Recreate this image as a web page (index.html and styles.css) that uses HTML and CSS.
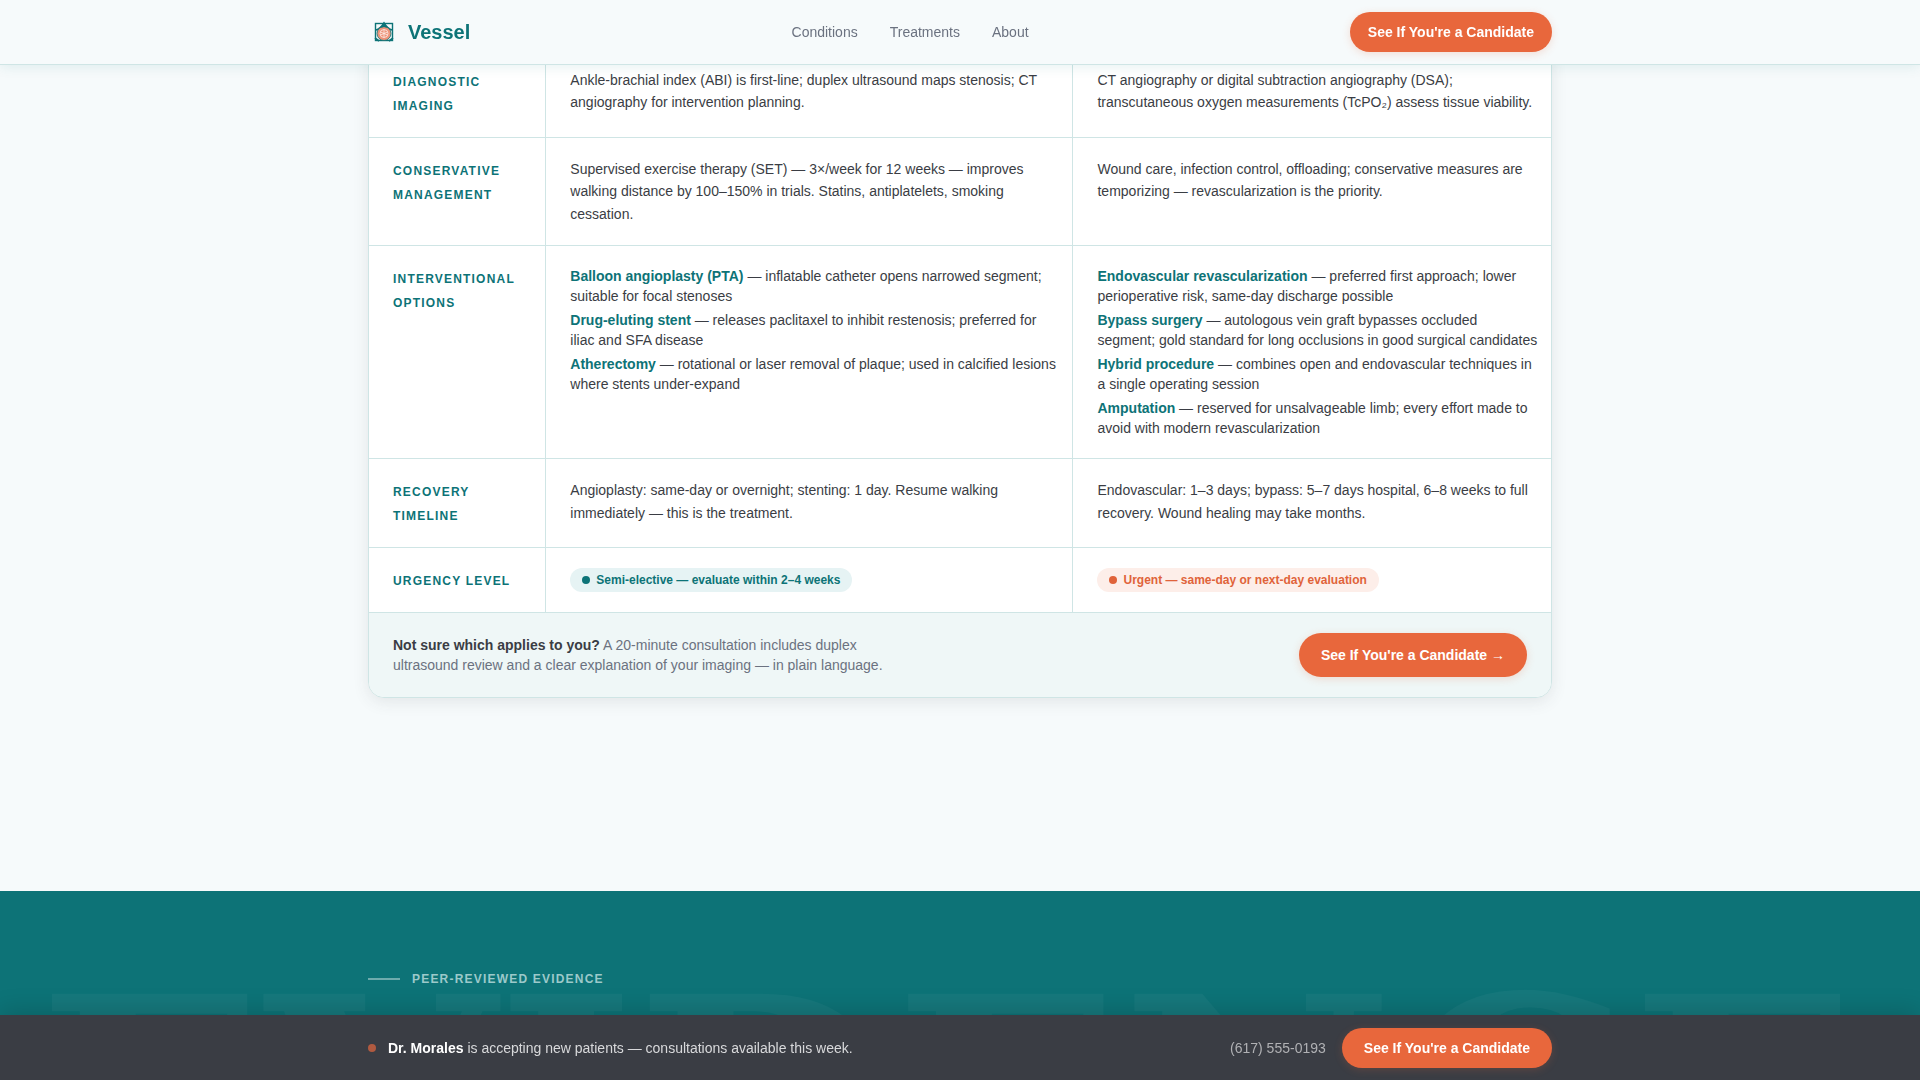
FILE: index.html
```html
<!DOCTYPE html>
<html lang="en">

<head>
    <meta charset="UTF-8">
    <meta name="viewport" content="width=device-width, initial-scale=1.0">
    <title>Vessel</title>
    <link rel="stylesheet" href="styles.css">
</head>

<body>
    <header class="site-header">
        <div class="container header-inner">
            <a class="logo" href="#">
                <svg class="logo-icon" viewBox="0 0 32 32" aria-hidden="true">
                    <rect x="7.500" y="7.500" width="17" height="17" fill="#f6fafb" stroke="#0d7377" stroke-width="1.4" />
                    <path d="M7 14c3 0 6-2 9-7 3 5 6 7 9 7M7 22l4 3M25 22l-4 3" fill="none" stroke="#0d7377" stroke-width="1.6" />
                    <circle cx="16" cy="17.500" r="7" fill="#ee9379" stroke="#0d7377" stroke-width="0.800" />
                    <path d="M12 12l4-4.500 4 4.500-4-1z" fill="#0d7377" />
                    <circle cx="16" cy="17.500" r="4" fill="none" stroke="#fdeee9" stroke-width="0.800" />
                    <path d="M16 13.500v8M12.500 16l7 3M19.500 16l-7 3" stroke="#fdeee9" stroke-width="0.800" />
                </svg>
                <span>Vessel</span>
            </a>
            <nav class="nav">
                <a href="#conditions">Conditions</a>
                <a href="#treatments">Treatments</a>
                <a href="#about">About</a>
            </nav>
            <a class="btn" href="#contact">See If You're a Candidate</a>
        </div>
    </header>

    <main>
        <section class="compare container" id="treatments">
            <div class="card">
                <table class="compare-table">
                    <colgroup>
                        <col class="col-label">
                        <col class="col-first">
                        <col>
                    </colgroup>
                    <tbody>
                        <tr>
                            <th scope="row">Diagnostic Imaging</th>
                            <td>Ankle-brachial index (ABI) is first-line; duplex ultrasound maps stenosis; CT angiography for intervention planning.</td>
                            <td>CT angiography or digital subtraction angiography (DSA); transcutaneous oxygen measurements (TcPO₂) assess tissue viability.</td>
                        </tr>
                        <tr>
                            <th scope="row">Conservative Management</th>
                            <td>Supervised exercise therapy (SET) — 3×/week for 12 weeks — improves walking distance by 100–150% in trials. Statins, antiplatelets, smoking cessation.</td>
                            <td>Wound care, infection control, offloading; conservative measures are temporizing — revascularization is the priority.</td>
                        </tr>
                        <tr>
                            <th scope="row">Interventional Options</th>
                            <td>
                                <ul class="options">
                                    <li><strong>Balloon angioplasty (PTA)</strong> — inflatable catheter opens narrowed segment; suitable for focal stenoses</li>
                                    <li><strong>Drug-eluting stent</strong> — releases paclitaxel to inhibit restenosis; preferred for iliac and SFA disease</li>
                                    <li><strong>Atherectomy</strong> — rotational or laser removal of plaque; used in calcified lesions where stents under-expand</li>
                                </ul>
                            </td>
                            <td>
                                <ul class="options">
                                    <li><strong>Endovascular revascularization</strong> — preferred first approach; lower perioperative risk, same-day discharge possible</li>
                                    <li><strong>Bypass surgery</strong> — autologous vein graft bypasses occluded<br>segment; gold standard for long occlusions in good surgical candidates</li>
                                    <li><strong>Hybrid procedure</strong> — combines open and endovascular techniques in a&nbsp;single operating session</li>
                                    <li><strong>Amputation</strong> — reserved for unsalvageable limb; every effort made to avoid with modern revascularization</li>
                                </ul>
                            </td>
                        </tr>
                        <tr>
                            <th scope="row">Recovery Timeline</th>
                            <td>Angioplasty: same-day or overnight; stenting: 1 day. Resume walking immediately — this is the treatment.</td>
                            <td>Endovascular: 1–3 days; bypass: 5–7 days hospital, 6–8 weeks to full recovery. Wound healing may take months.</td>
                        </tr>
                        <tr>
                            <th scope="row">Urgency Level</th>
                            <td><span class="badge badge-elective">Semi-elective — evaluate within 2–4 weeks</span></td>
                            <td><span class="badge badge-urgent">Urgent — same-day or next-day evaluation</span></td>
                        </tr>
                    </tbody>
                </table>
                <div class="card-footer">
                    <p><strong>Not sure which applies to you?</strong> A 20-minute consultation includes duplex<br>ultrasound review and a clear explanation of your imaging — in plain language.</p>
                    <a class="btn btn-large" href="#contact">See If You're a Candidate →</a>
                </div>
            </div>
        </section>

        <section class="evidence">
            <div class="watermark" aria-hidden="true">EVIDENCE</div>
            <div class="container">
                <p class="eyebrow">Peer-Reviewed Evidence</p>
            </div>
        </section>
    </main>

    <div class="sticky-bar">
        <div class="container sticky-inner">
            <p class="notice"><strong>Dr. Morales</strong> is accepting new patients — consultations available this week.</p>
            <a class="phone" href="tel:+16175550193">(617) 555-0193</a>
            <a class="btn btn-bar" href="#contact">See If You're a Candidate</a>
        </div>
    </div>
</body>

</html>
```
FILE: styles.css
```css
* {
    box-sizing: border-box;
}

body {
    margin: 0;
    font-family: "Liberation Sans", Arial, sans-serif;
    font-size: 14px;
    color: #3a3d44;
    background-color: #f6fafb;
}

main {
    display: flex;
    flex-direction: column;
    min-height: 100vh;
}

p {
    margin: 0;
}

a {
    text-decoration: none;
}

.container {
    width: 100%;
    max-width: 1248px;
    margin: 0 auto;
    padding: 0 32px;
}

/* Header */
.site-header {
    position: fixed;
    top: 0;
    left: 0;
    right: 0;
    z-index: 10;
    background-color: #f6fafb;
    border-bottom: 1px solid #cfe5e5;
    box-shadow: 0 2px 12px rgba(13, 115, 119, 0.1);
}

.header-inner {
    display: flex;
    align-items: center;
    justify-content: space-between;
    height: 64px;
}

.logo {
    display: flex;
    align-items: center;
    gap: 8px;
    font-size: 20px;
    font-weight: bold;
    color: #0d7377;
}

.logo-icon {
    width: 32px;
    height: 32px;
}

.nav {
    display: flex;
    gap: 32px;
}

.nav a {
    color: #6b7280;
}

/* Buttons */
.btn {
    display: inline-block;
    padding: 0 18px;
    border-radius: 999px;
    font-weight: bold;
    line-height: 40px;
    white-space: nowrap;
    color: #fff;
    background-color: #e8673c;
    box-shadow: 0 2px 8px rgba(232, 103, 60, 0.2);
}

.btn-large {
    padding: 0 22px;
    line-height: 44px;
}

.btn-bar {
    padding: 0 22px;
}

/* Comparison table */
.compare {
    padding-top: 48px;
    padding-bottom: 193px;
}

.card {
    overflow: hidden;
    border: 1px solid #cfe5e5;
    border-radius: 16px;
    background-color: #fff;
    box-shadow: 0 4px 16px rgba(58, 61, 68, 0.1);
}

.compare-table {
    width: 100%;
    border-collapse: separate;
    border-spacing: 0;
    table-layout: fixed;
}

.col-label {
    width: 15%;
}

.col-first {
    width: 44.600%;
}

.compare-table th,
.compare-table td {
    padding: 20px 12px 20px 24px;
    text-align: left;
    vertical-align: top;
    border-right: 1px solid #cfe5e5;
    border-bottom: 1px solid #cfe5e5;
}

.compare-table td:last-child {
    border-right: none;
}

.compare-table th {
    padding-top: 21px;
    padding-bottom: 19px;
    font-size: 12px;
    line-height: 24px;
    letter-spacing: 0.1em;
    text-transform: uppercase;
    color: #0d7377;
}

.compare-table td {
    line-height: 1.6;
}

.options {
    display: flex;
    flex-direction: column;
    gap: 4px;
    margin: 0;
    padding: 0;
    list-style: none;
    line-height: 20px;
}

.options strong {
    color: #0d7377;
}

.badge {
    display: inline-flex;
    align-items: center;
    gap: 6px;
    padding: 0 12px;
    border-radius: 999px;
    font-size: 12px;
    font-weight: bold;
    line-height: 24px;
    vertical-align: top;
}

.badge::before {
    content: "";
    width: 8px;
    height: 8px;
    border-radius: 50%;
    background-color: currentColor;
}

.badge-elective {
    color: #0d7377;
    background-color: #e6f3f4;
}

.badge-urgent {
    color: #e0633a;
    background-color: #fdeee9;
}

.card-footer {
    display: flex;
    align-items: center;
    justify-content: space-between;
    padding: 20px 24px;
    line-height: 20px;
    color: #6b7280;
    background-color: #eff7f7;
}

.card-footer strong {
    color: #3a3d44;
}

/* Evidence section */
.evidence {
    position: relative;
    flex: 1;
    padding-top: 80px;
    overflow: hidden;
    background-color: #0d7377;
}

.eyebrow {
    display: flex;
    align-items: center;
    gap: 12px;
    font-size: 12px;
    font-weight: bold;
    line-height: 16px;
    letter-spacing: 0.1em;
    text-transform: uppercase;
    color: #9cc9ca;
}

.eyebrow::before {
    content: "";
    width: 32px;
    height: 2px;
    background-color: #6eabad;
}

/* Oversized word behind the section content */
.watermark {
    position: absolute;
    top: 66px;
    left: 38px;
    font-family: "DejaVu Serif", serif;
    font-size: 298px;
    font-weight: bold;
    line-height: 1;
    white-space: nowrap;
    color: rgba(255, 255, 255, 0.04);
}

/* Sticky contact bar */
.sticky-bar {
    position: fixed;
    left: 0;
    right: 0;
    bottom: 0;
    z-index: 10;
    background-color: #3a3d44;
    box-shadow: 0 -4px 24px rgba(0, 0, 0, 0.16);
}

.sticky-inner {
    display: flex;
    align-items: center;
    gap: 16px;
    height: 65px;
}

.notice {
    display: flex;
    align-items: center;
    flex: 1;
    white-space: pre-wrap;
    color: #d8d9db;
}

.notice::before {
    content: "";
    width: 8px;
    height: 8px;
    margin-right: 12px;
    border-radius: 50%;
    background-color: #b05a40;
}

.notice strong {
    color: #fff;
}

.phone {
    color: #b0b1b4;
}
```
